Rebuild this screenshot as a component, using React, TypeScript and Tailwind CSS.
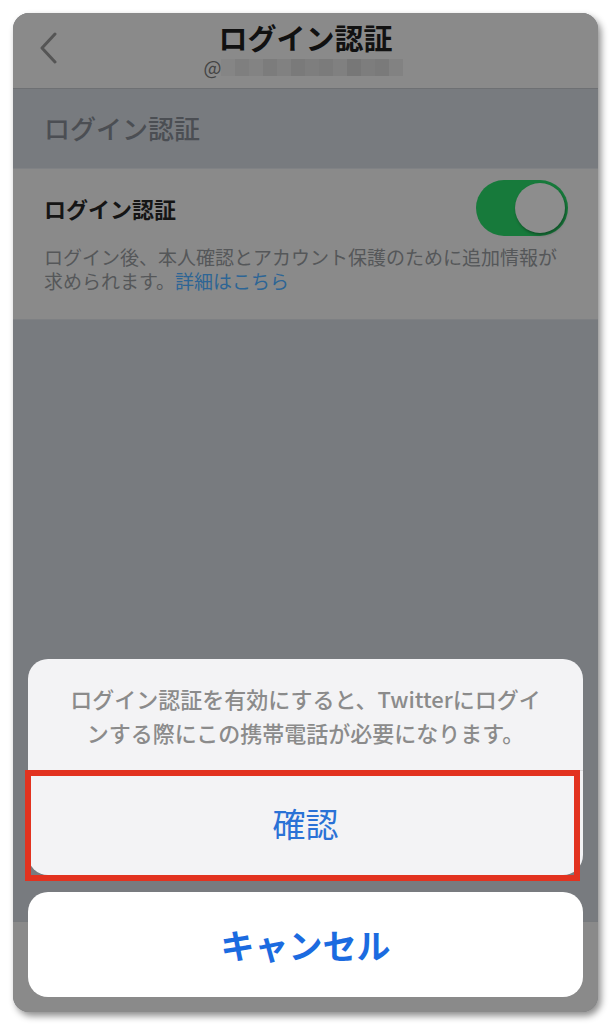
import React from "react";

const blurBlocks = [
  "#858585", "#7f7f7f", "#838383", "#7c7c7c", "#818181", "#7a7a7a", "#7e7e7e",
  "#7b7b7b", "#808080", "#777777", "#7d7d7d", "#7a7a7a", "#828282",
];

export default function App() {
  return (
    <div
      className="w-[611px] h-[1024px] bg-white pl-[13px] pt-[13px] overflow-hidden"
      style={{ fontFamily: '"Noto Sans CJK JP", "Noto Sans", sans-serif' }}
    >
      <div className="relative w-[585px] h-[999px] rounded-[16px] overflow-hidden bg-[#787b7f] shadow-[3px_4px_7px_rgba(0,0,0,0.45)] flex flex-col">
        {/* Nav bar */}
        <div className="h-[76px] shrink-0 bg-[#8a8a8a] border-b border-[#6e7073] grid grid-cols-[1fr_auto_1fr]">
          <div className="pl-[26px] pt-[19px]">
            <svg width="20" height="32" viewBox="0 0 20 32" fill="none">
              <path d="M16 2 L3 16 L16 30" stroke="#555555" strokeWidth="3" strokeLinecap="round" strokeLinejoin="round" />
            </svg>
          </div>
          <div className="flex flex-col items-center pt-[7px]">
            <div className="text-[29px] leading-[34px] font-bold text-[#111111]">ログイン認証</div>
            <div className="flex items-center mt-[3px] h-[20px] -ml-[4px]">
              <span className="text-[19px] leading-[20px] text-[#444444]">@</span>
              <div className="flex h-[17px] ml-[0px]">
                {blurBlocks.map((c, i) => (
                  <div key={i} className="w-[14px] h-full" style={{ backgroundColor: c }} />
                ))}
              </div>
            </div>
          </div>
          <div />
        </div>

        {/* Section header */}
        <div className="h-[80px] shrink-0 flex items-center pl-[31px] border-b border-[#808285]">
          <span className="text-[26px] leading-[32px] font-medium text-[#4b4e53] -mt-[2px]">ログイン認証</span>
        </div>

        {/* Cell */}
        <div className="h-[151px] shrink-0 bg-[#8a8a8a] border-b border-[#7e8083] px-[31px] pt-[11px]">
          <div className="flex items-center justify-between h-[56px]">
            <span className="text-[22px] font-bold text-[#151515] leading-[28px]">ログイン認証</span>
            <div className="w-[92px] h-[56px] rounded-full bg-[#177a3b] flex items-center justify-end pr-[3px] -mr-[1px]">
              <div className="w-[50px] h-[50px] rounded-full bg-[#8d8d8d] shadow-[1px_2px_3px_rgba(0,0,0,0.35)]" />
            </div>
          </div>
          <div className="mt-[9px] text-[19px] leading-[24px] text-[#555759] whitespace-nowrap flex flex-col">
            <div>ログイン後、本人確認とアカウント保護のために追加情報が</div>
            <div className="flex">
              <span>求められます。</span>
              <span className="text-[#2d6595]">詳細はこちら</span>
            </div>
          </div>
        </div>

        <div className="flex-1" />

        {/* Bottom bar (dimmed) */}
        <div className="h-[91px] shrink-0 bg-[#8a8a8a] border-t border-[#777a7d]" />

        {/* Action sheet overlay */}
        <div className="absolute left-[15px] top-[646px] w-[555px] flex flex-col">
          <div className="bg-[#f3f3f5] rounded-[20px] flex flex-col">
            <div className="pt-[22px] pb-[21px] px-[24px] text-center text-[22px] leading-[34px] font-medium text-[#8b8b8b] whitespace-nowrap flex flex-col">
              <div>ログイン認証を有効にすると、Twitterにログイ</div>
              <div>ンする際にこの携帯電話が必要になります。</div>
            </div>
            <div className="relative h-[105px] border-t border-[#dcdcde] flex items-center justify-center">
              <span className="text-[33px] leading-[40px] text-[#2a72d6]">確認</span>
              <div className="absolute -left-[3px] -top-[1px] w-[555px] h-[111px] border-[6px] border-[#e2321f]" />
            </div>
          </div>
          <div className="mt-[17px] h-[105px] bg-white rounded-[20px] flex items-center justify-center">
            <span className="text-[34px] leading-[40px] font-bold text-[#1b6be0]">キャンセル</span>
          </div>
        </div>
      </div>
    </div>
  );
}
